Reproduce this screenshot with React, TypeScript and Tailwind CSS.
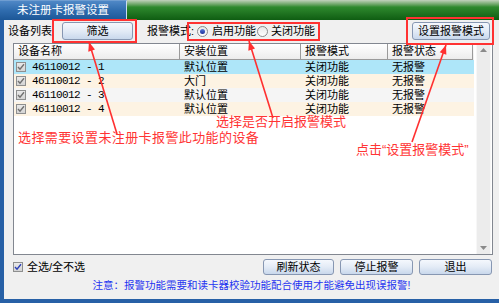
import React from "react";

type Row = {
  id: string;
  place: string;
  mode: string;
  state: string;
  bg: string;
};

const rows: Row[] = [
  { id: "46110012 - 1", place: "默认位置", mode: "关闭功能", state: "无报警", bg: "bg-[#aee6f9]" },
  { id: "46110012 - 2", place: "大门", mode: "关闭功能", state: "无报警", bg: "bg-[#fdf3e3]" },
  { id: "46110012 - 3", place: "默认位置", mode: "关闭功能", state: "无报警", bg: "bg-[#f5f5f5]" },
  { id: "46110012 - 4", place: "默认位置", mode: "关闭功能", state: "无报警", bg: "bg-[#fdf3e3]" },
];

function Btn({ label, className }: { label: string; className: string }) {
  return (
    <button
      className={
        "h-full flex items-center justify-center rounded-[3px] border border-[#8797b2] bg-gradient-to-b from-[#f5f8fd] via-[#e3ebf6] to-[#c9d8ec] text-[11px] text-black leading-none " +
        className
      }
    >
      {label}
    </button>
  );
}

function Check({ blue }: { blue?: boolean }) {
  return (
    <span className="w-[10px] h-[10px] border border-[#8e8f8f] bg-gradient-to-b from-[#e9e9e9] to-[#d4d4d4] flex items-center justify-center shrink-0">
      <svg width="8" height="8" viewBox="0 0 8 8">
        <path
          d="M1 4 L3 6.2 L7 1.2"
          fill="none"
          stroke={blue ? "#2a3fb8" : "#707070"}
          strokeWidth="1.4"
        />
      </svg>
    </span>
  );
}

function Radio({ on }: { on?: boolean }) {
  return (
    <span className="w-[11px] h-[11px] rounded-full border border-[#8a8a8a] bg-gradient-to-b from-[#e8e8e8] to-[#fdfdfd] flex items-center justify-center shrink-0">
      {on && <span className="w-[5px] h-[5px] rounded-full bg-gradient-to-b from-[#5a78d8] to-[#1f2f9a]" />}
    </span>
  );
}

function arrowHead(tx: number, ty: number, px: number, py: number) {
  const dx = px - tx;
  const dy = py - ty;
  const len = Math.sqrt(dx * dx + dy * dy);
  const ux = dx / len;
  const uy = dy / len;
  const bx = px - ux * 9;
  const by = py - uy * 9;
  const nx = -uy * 3.5;
  const ny = ux * 3.5;
  return `${px},${py} ${bx + nx},${by + ny} ${bx - nx},${by - ny}`;
}

const arrows = [
  { t: [117, 134], p: [89, 42] },
  { t: [273, 118], p: [249, 41] },
  { t: [412, 142], p: [446, 45] },
];

export default function App() {
  return (
    <div className="w-[499px] h-[303px] relative overflow-hidden flex flex-col bg-[#f0f0f0] font-['Liberation_Sans','Noto_Sans_CJK_SC',sans-serif] text-black">
      {/* TITLE */}
      <div className="h-[20px] flex shrink-0">
        <div className="w-[127px] border-t border-[#6f9dd1] border-r border-r-[#c9dcf0] bg-gradient-to-b from-[#4f88c6] via-[#2f6cae] to-[#1c5797] text-white text-[11.5px] flex items-center justify-center">
          未注册卡报警设置
        </div>
        <div className="flex-1 bg-gradient-to-b from-[#c2d2bd] via-[#2e8a2e] via-[35%] to-[#0f5d12]" />
      </div>

      {/* BODY */}
      <div className="flex-1 flex flex-col border-l-4 border-b-4 border-[#2760a6]">
        {/* controls */}
        <div className="mt-[2px] h-[18px] flex items-center text-[11px]">
          <span className="ml-[4px] w-[50px]">设备列表</span>
          <Btn label="筛选" className="ml-[4px] w-[71px]" />
          <span className="ml-[14px] w-[50px]">报警模式:</span>
          <Radio on />
          <span className="ml-[4px] w-[45px]">启用功能</span>
          <Radio />
          <span className="ml-[3px]">关闭功能</span>
          <Btn label="设置报警模式" className="ml-auto mr-[9px] w-[78px]" />
        </div>

        {/* list */}
        <div className="mt-[3px] ml-[9px] w-[480px] h-[212px] border border-[#828790] bg-white flex">
          <div className="w-[460px] flex flex-col text-[11px]">
            <div className="h-[16px] flex bg-gradient-to-b from-[#ffffff] to-[#ebebeb]">
              <div className="w-[166px] pl-[4px] border-r border-b border-[#9a9a9a] flex items-center">设备名称</div>
              <div className="w-[121px] pl-[4px] border-r border-b border-[#9a9a9a] flex items-center">安装位置</div>
              <div className="w-[87px] pl-[4px] border-r border-b border-[#9a9a9a] flex items-center">报警模式</div>
              <div className="w-[85px] pl-[4px] border-r border-b border-[#9a9a9a] flex items-center">报警状态</div>
            </div>
            {rows.map((r) => (
              <div key={r.id} className={"h-[14px] flex items-center " + r.bg}>
                <div className="w-[166px] pl-[2px] flex items-center">
                  <Check />
                  <span className="ml-[6px] font-['Liberation_Mono',monospace] text-[11px] tracking-[-0.6px]">
                    {r.id}
                  </span>
                </div>
                <div className="w-[121px] pl-[4px]">{r.place}</div>
                <div className="w-[87px] pl-[4px]">{r.mode}</div>
                <div className="w-[85px] pl-[4px]">{r.state}</div>
              </div>
            ))}
          </div>
          <div className="flex-1" />
          <div className="w-[15px] mr-[1px] bg-[#ececec] border-l border-r border-[#f7f7f7] flex flex-col items-center justify-between py-[4px]">
            <svg width="7" height="4" viewBox="0 0 7 4">
              <path d="M0 4 L3.5 0 L7 4 Z" fill="#8a8a8a" />
            </svg>
            <svg width="7" height="4" viewBox="0 0 7 4">
              <path d="M0 0 L3.5 4 L7 0 Z" fill="#8a8a8a" />
            </svg>
          </div>
        </div>

        {/* bottom controls */}
        <div className="mt-[4px] h-[16px] flex items-center text-[11px]">
          <span className="ml-[9px]">
            <Check blue />
          </span>
          <span className="ml-[4px]">全选/全不选</span>
          <div className="ml-auto mr-[7px] h-full flex gap-[6px]">
            <Btn label="刷新状态" className="w-[71px]" />
            <Btn label="停止报警" className="w-[73px]" />
            <Btn label="退出" className="w-[73px]" />
          </div>
        </div>

        <div className="mt-[3px] text-center text-[10.5px] text-[#1f35f0] leading-[14px]">
          注意：报警功能需要和读卡器校验功能配合使用才能避免出现误报警!
        </div>
      </div>

      {/* ANNOTATIONS */}
      <div className="absolute left-[52px] top-[19px] w-[85px] h-[24px] border-2 border-[#ff3232]" />
      <div className="absolute left-[187px] top-[22px] w-[133px] h-[19px] border-2 border-[#ff3232]" />
      <div className="absolute left-[406px] top-[17px] w-[88px] h-[28px] border-2 border-[#ff3232]" />

      <div className="absolute left-[216px] top-[114px] text-[13px] leading-[15px] text-[#ff3434]">
        选择是否开启报警模式
      </div>
      <div className="absolute left-[18px] top-[130px] text-[13px] leading-[15px] text-[#ff3434] tracking-[0.4px]">
        选择需要设置未注册卡报警此功能的设备
      </div>
      <div className="absolute left-[356px] top-[142px] text-[13px] leading-[15px] text-[#ff3434]">
        点击“设置报警模式”
      </div>

      <svg className="absolute inset-0 pointer-events-none" width="499" height="303">
        {arrows.map((a, i) => (
          <g key={i}>
            <line x1={a.t[0]} y1={a.t[1]} x2={a.p[0]} y2={a.p[1]} stroke="#ff3030" strokeWidth="1.6" />
            <polygon points={arrowHead(a.t[0], a.t[1], a.p[0], a.p[1])} fill="#ff3030" />
          </g>
        ))}
      </svg>
    </div>
  );
}
